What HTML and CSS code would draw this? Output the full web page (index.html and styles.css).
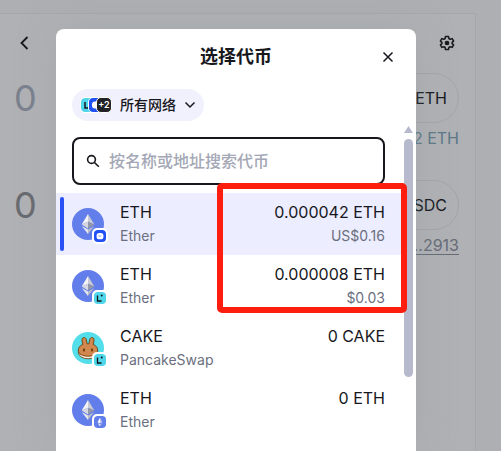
FILE: index.html
```html
<!DOCTYPE html>
<html lang="zh-CN">
<head>
<meta charset="utf-8">
<meta name="viewport" content="width=device-width, initial-scale=1">
<title>选择代币</title>
<link rel="stylesheet" href="styles.css">
</head>
<body>
<svg class="defs" width="0" height="0" aria-hidden="true">
  <symbol id="eth" viewBox="0 0 32 32">
    <circle cx="16" cy="16" r="16" fill="#627eea"/>
    <path d="M16 6 9.7 16.6 16 13.8Z" fill="#f4f4f6"/>
    <path d="M16 6v7.8l6.3 2.8Z" fill="#c9cbd6"/>
    <path d="M9.7 16.6 16 13.8v6.6Z" fill="#d6d7df"/>
    <path d="M16 13.8v6.6l6.3-3.8Z" fill="#9497a8"/>
    <path d="M9.7 18 16 26v-4.4Z" fill="#e8e8ec"/>
    <path d="M16 21.6V26l6.3-8Z" fill="#b9bbc8"/>
  </symbol>
  <symbol id="cake" viewBox="0 0 32 32">
    <circle cx="16" cy="16" r="16" fill="#53dee9"/>
    <ellipse cx="16" cy="20.5" rx="9.600" ry="6.300" fill="#fff0dc" stroke="#633001" stroke-width=".8"/>
    <path d="M10 7.500c.2-2.600 3.600-2.600 4.300 0l.8 4.300h1.800l.8-4.300c.7-2.600 4.100-2.600 4.300 0 .1 2-.4 3.400-.8 4.900 2.700 1.200 4.500 3 4.500 5.800 0 4-4.400 6-9.700 6s-9.700-2-9.700-6c0-2.800 1.800-4.600 4.500-5.800-.4-1.500-.9-2.900-.8-4.900Z" fill="#d1884f" stroke="#633001" stroke-width=".8"/>
    <ellipse cx="12" cy="18" rx=".9" ry="1.700" fill="#633001"/>
    <ellipse cx="20" cy="18" rx=".9" ry="1.700" fill="#633001"/>
  </symbol>
  <symbol id="net-blue" viewBox="0 0 12 12">
    <rect width="12" height="12" rx="3.500" fill="#2151f5"/>
    <rect x="2.600" y="3" width="6.800" height="6.300" rx="2.600" fill="#fff"/>
    <path d="M4.200 6h3" stroke="#8ea6fa" stroke-width="1.200"/>
  </symbol>
  <symbol id="net-linea" viewBox="0 0 12 12">
    <rect width="12" height="12" rx="3.500" fill="#4fd6ea"/>
    <path d="M3.500 3.500V9h4" fill="none" stroke="#121212" stroke-width="1.300"/>
    <circle cx="7.700" cy="3.400" r="1" fill="#121212"/>
  </symbol>
  <symbol id="net-eth" viewBox="0 0 12 12">
    <rect width="12" height="12" rx="3.500" fill="#627eea"/>
    <path d="M6 1.800 3.600 6.200 6 7.500Z M3.600 7 6 10.200V8.400Z" fill="#fff"/>
    <path d="M6 1.800 8.400 6.200 6 7.500Z M8.400 7 6 10.200V8.400Z" fill="#bdc7f4"/>
  </symbol>
</svg>
<div class="app">
  <main class="swap">
    <header class="swap-head">
      <button class="plain" aria-label="返回"><svg width="16" height="16" viewBox="0 0 16 16"><path d="M11.500 2 5.500 8l6 6" fill="none" stroke="#17181d" stroke-width="1.800"/></svg></button>
      <button class="plain" aria-label="设置"><svg width="16" height="16" viewBox="0 0 16 16" fill="none" stroke="#17181d" stroke-width="1.500" stroke-linejoin="round"><path d="M6.500 1.500h3l.4 2 1.300.8 2-.7 1.400 2.500-1.500 1.300v1.200l1.500 1.300-1.400 2.500-2-.7-1.300.8-.4 2h-3l-.4-2-1.300-.8-2 .7-1.400-2.500 1.500-1.300V7.400L1.400 6.100l1.400-2.500 2 .7 1.300-.8Z"/><circle cx="8" cy="8" r="1.600" fill="#17181d"/></svg></button>
    </header>
    <section class="side">
      <div class="side-row"><span class="amount amount-in">0</span><button class="token-pill">ETH</button></div>
      <p class="note balance">2 ETH</p>
    </section>
    <section class="side">
      <div class="side-row"><span class="amount">0</span><button class="token-pill">USDC</button></div>
      <p class="note"><a href="#">…2913</a></p>
    </section>
  </main>

  <div class="layer">
    <div class="modal" role="dialog" aria-labelledby="title">
      <header class="modal-head">
        <h1 id="title">选择代币</h1>
        <button class="plain close" aria-label="关闭"><svg width="12" height="12" viewBox="0 0 12 12"><path d="m1.500 1.500 9 9m0-9-9 9" stroke="#17181d" stroke-width="1.500"/></svg></button>
      </header>
      <div class="tools">
        <button class="networks">
          <span class="stack">
            <svg class="chip" viewBox="0 0 14 14"><rect width="14" height="14" rx="4" fill="#4fd6ea"/><path d="M4 4v6h4" fill="none" stroke="#17181d" stroke-width="1.500"/></svg>
            <svg class="chip" viewBox="0 0 14 14"><rect width="14" height="14" rx="4" fill="#2151f5"/><rect x="3" y="3.500" width="8" height="7" rx="3" fill="#fff"/></svg>
            <span class="chip more">+2</span>
          </span>
          <span>所有网络</span>
          <svg width="12" height="12" viewBox="0 0 12 12"><path d="m1.500 3.500 4.500 4.500 4.500-4.500" fill="none" stroke="#17181d" stroke-width="1.500"/></svg>
        </button>
        <label class="search">
          <svg width="14" height="14" viewBox="0 0 14 14" fill="none" stroke="#17181d" stroke-width="1.600"><circle cx="5.500" cy="5.500" r="3.900"/><path d="m8.500 8.500 4.300 4.300"/></svg>
          <input type="text" aria-label="搜索代币" placeholder="按名称或地址搜索代币">
        </label>
      </div>
      <div class="list-wrap">
        <ul class="tokens">
          <li class="token selected">
            <span class="logo"><svg class="coin"><use href="#eth"/></svg><svg class="net"><use href="#net-blue"/></svg></span>
            <span class="names"><b>ETH</b><small>Ether</small></span>
            <span class="names worth"><b>0.000042 ETH</b><small>US$0.16</small></span>
          </li>
          <li class="token">
            <span class="logo"><svg class="coin"><use href="#eth"/></svg><svg class="net"><use href="#net-linea"/></svg></span>
            <span class="names"><b>ETH</b><small>Ether</small></span>
            <span class="names worth"><b>0.000008 ETH</b><small>$0.03</small></span>
          </li>
          <li class="token">
            <span class="logo"><svg class="coin"><use href="#cake"/></svg><svg class="net"><use href="#net-linea"/></svg></span>
            <span class="names"><b>CAKE</b><small>PancakeSwap</small></span>
            <span class="names worth"><b>0 CAKE</b></span>
          </li>
          <li class="token">
            <span class="logo"><svg class="coin"><use href="#eth"/></svg><svg class="net"><use href="#net-eth"/></svg></span>
            <span class="names"><b>ETH</b><small>Ether</small></span>
            <span class="names worth"><b>0 ETH</b></span>
          </li>
        </ul>
        <div class="highlight"></div>
      </div>
      <div class="scrollbar"><i class="arrow"></i><i class="thumb"></i></div>
    </div>
  </div>
</div>
</body>
</html>
```
FILE: styles.css
```css
* { box-sizing: border-box; }

body {
  margin: 0;
  background: #adafb2;
  color: #17181d;
  font-family: Inter, "Noto Sans CJK SC", sans-serif;
  font-size: 16px;
  line-height: 24px;
}

button, input { font: inherit; color: inherit; }
.defs { position: absolute; }
.plain { display: flex; padding: 0; border: 0; background: none; }

.app {
  position: relative;
  min-height: 100vh;
  padding: 13px 25px 0 0;
  overflow: hidden;
}

.swap {
  min-height: calc(100vh - 13px);
  padding: 21px 16px 0 14px;
  border: 1px solid #a5a7ab;
  border-width: 1px 1px 0 0;
  background: #b0b1b5;
}

.swap-head {
  display: flex;
  justify-content: space-between;
  margin-bottom: 22px;
  padding: 0 4px 0 2px;
}

.side { margin-bottom: 32px; }
.side-row { display: flex; justify-content: space-between; align-items: center; }
.amount { font-size: 36px; line-height: 50px; font-weight: 400; color: #686a70; }
.amount-in { color: #7b818e; }

.token-pill {
  height: 50px;
  min-width: 110px;
  padding: 0 11px;
  border: 1px solid #a3a5a9;
  border-radius: 25px;
  background: none;
  text-align: right;
}

.note { margin: 5px 0 0; text-align: right; line-height: 20px; color: #656b77; }
.balance { color: #5d7888; }
.note a { color: inherit; text-underline-offset: 3px; }

/* The dialog covers the swap card */
.layer {
  position: absolute;
  inset: 29px 29px 0 0;
  display: flex;
  justify-content: center;
}

.modal {
  position: relative;
  width: 360px;
  max-width: 100%;
  border-radius: 8px 8px 0 0;
  background: #fff;
  box-shadow: 0 0 40px rgba(135, 150, 150, 0.3);
}

.modal-head {
  display: flex;
  justify-content: center;
  align-items: center;
  padding: 16px 22px 20px;
}

.modal-head::before { content: ""; width: 12px; }
.modal-head h1 { flex: 1; margin: 0; font-size: 18px; line-height: 24px; font-weight: 700; text-align: center; }

.tools { padding: 0 31px 8px 16px; }

.networks {
  display: flex;
  align-items: center;
  gap: 8px;
  height: 32px;
  margin-bottom: 16px;
  padding: 0 8px;
  border: 0;
  border-radius: 16px;
  background: #f1f1fe;
  font-size: 14px;
  font-weight: 500;
}

.stack { display: flex; }
.chip {
  width: 16px;
  height: 16px;
  border: 1px solid #fff;
  border-radius: 5px;
}
.chip + .chip { margin-left: -8px; }
.more { background: #222327; color: #fff; font-size: 9px; line-height: 14px; font-weight: 600; text-align: center; }

.search {
  display: flex;
  align-items: center;
  gap: 9px;
  height: 48px;
  padding: 0 12px;
  border: 2px solid #17181d;
  border-radius: 8px;
}
.search input { flex: 1; min-width: 0; padding: 0; border: 0; outline: 0; background: none; font-weight: 500; }
.search input::placeholder { color: #a4a7b5; opacity: 1; }

.list-wrap { position: relative; }
.tokens { margin: 0 13px 0 0; padding: 0; list-style: none; }

.token {
  position: relative;
  display: flex;
  align-items: center;
  gap: 16px;
  height: 62px;
  padding: 0 18px 0 16px;
}
.selected { background: #ecedfe; }
.selected::before {
  content: "";
  position: absolute;
  inset: 4px auto 4px 4px;
  width: 4px;
  border-radius: 2px;
  background: #2b50f6;
}

.logo { position: relative; width: 32px; height: 32px; }
.coin { display: block; width: 32px; height: 32px; }
.net {
  position: absolute;
  right: -4px;
  bottom: -4px;
  width: 16px;
  height: 16px;
  border: 2px solid #fff;
  border-radius: 5px;
  background: #fff;
}

.names { display: flex; flex-direction: column; height: 48px; }
.names b { font-weight: 400; }
.names small { font-size: 14px; color: #6b6f7f; }
.worth { margin-left: auto; text-align: right; }

.highlight {
  position: absolute;
  z-index: 2;
  top: -10px;
  right: 9px;
  width: 190px;
  height: 130px;
  border: 6px solid #fd1e10;
  border-radius: 5px;
}

.scrollbar {
  position: absolute;
  z-index: 1;
  top: 97px;
  right: 3px;
  display: flex;
  flex-direction: column;
  gap: 6px;
  width: 9px;
}
.arrow { height: 7px; background: #b7bacd; clip-path: polygon(50% 0, 100% 100%, 0 100%); }
.thumb { height: 238px; border-radius: 5px; background: #b7bacd; }
```
